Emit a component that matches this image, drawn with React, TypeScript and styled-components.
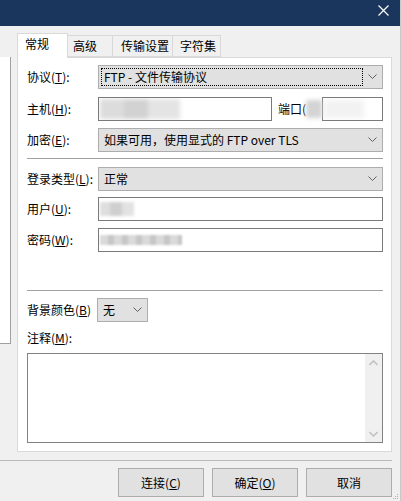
import React from "react";
import styled, { createGlobalStyle } from "styled-components";

const GlobalStyle = createGlobalStyle`
  html, body { margin: 0; padding: 0; background: #f0f0f0; }
  * { box-sizing: border-box; }
`;

const Window = styled.div`
  position: relative;
  width: 401px;
  height: 501px;
  background: #f0f0f0;
  display: flex;
  flex-direction: column;
  overflow: hidden;
  font-family: "Noto Sans CJK SC", "Microsoft YaHei", sans-serif;
  font-size: 12px;
  line-height: 16px;
  color: #000;
  border-right: 1px solid #c8c8c8;
`;

const TitleBar = styled.div`
  height: 26px;
  flex-shrink: 0;
  background: #1b365d;
  display: flex;
  justify-content: flex-end;
  align-items: flex-start;
  padding: 5px 11px 0 0;
`;

const Body = styled.div`
  height: 434px;
  flex-shrink: 0;
  display: flex;
  align-items: flex-start;
`;

const SiteTree = styled.div`
  width: 11px;
  height: 287px;
  margin-top: 31px;
  background: #fff;
  border-right: 1px solid #a0a0a0;
  border-bottom: 1px solid #a0a0a0;
  flex-shrink: 0;
`;

const TabArea = styled.div`
  margin-left: 6px;
  margin-top: 7px;
  width: 375px;
  display: flex;
  flex-direction: column;
`;

const TabStrip = styled.div`
  display: flex;
  align-items: flex-end;
  height: 24px;
  position: relative;
  z-index: 1;
`;

const Tab = styled.div<{ $active?: boolean; $w: number; $pad: number }>`
  width: ${(p) => p.$w}px;
  padding-left: ${(p) => p.$pad}px;
  height: ${(p) => (p.$active ? 25 : 22)}px;
  margin-bottom: ${(p) => (p.$active ? -1 : 0)}px;
  background: ${(p) => (p.$active ? "#fff" : "#f0f0f0")};
  border: 1px solid #d9d9d9;
  border-bottom: ${(p) => (p.$active ? "none" : "1px solid #d9d9d9")};
  border-left: ${(p) => (p.$active ? "1px solid #d9d9d9" : "none")};
  padding-top: ${(p) => (p.$active ? 2 : 2)}px;
  white-space: nowrap;
`;

const Panel = styled.div`
  height: 395px;
  background: #fff;
  border: 1px solid #d9d9d9;
  padding: 7px 8px 0 9px;
  display: flex;
  flex-direction: column;
`;

const Row = styled.div<{ $mt: number }>`
  display: flex;
  align-items: center;
  height: 24px;
  margin-top: ${(p) => p.$mt}px;
`;

const Label = styled.div<{ $w?: number }>`
  width: ${(p) => p.$w ?? 71}px;
  flex-shrink: 0;
  white-space: nowrap;
`;

const U = styled.span`
  text-decoration: underline;
  text-underline-offset: 1px;
`;

const SelectBox = styled.div<{ $w?: number }>`
  ${(p) => (p.$w ? `width: ${p.$w}px;` : "flex: 1;")}
  height: 24px;
  background: #e1e1e1;
  border: 1px solid #adadad;
  display: flex;
  align-items: stretch;
`;

const SelectValue = styled.div<{ $focus?: boolean }>`
  flex: 1;
  margin: 2px 0 2px 2px;
  padding-left: 2px;
  display: flex;
  align-items: center;
  border: 1px dotted ${(p) => (p.$focus ? "#000" : "transparent")};
  white-space: nowrap;
  overflow: hidden;
`;

const ArrowBox = styled.div`
  width: 19px;
  display: flex;
  align-items: center;
  justify-content: center;
`;

const Input = styled.div<{ $w?: number }>`
  ${(p) => (p.$w ? `width: ${p.$w}px;` : "flex: 1;")}
  height: 24px;
  background: #fff;
  border: 1px solid #7a7a7a;
  display: flex;
  align-items: center;
  padding-left: 1px;
  overflow: hidden;
`;

const Blur = styled.div<{ $w: number; $h: number; $bg: string; $r?: number }>`
  width: ${(p) => p.$w}px;
  height: ${(p) => p.$h}px;
  background: ${(p) => p.$bg};
  filter: blur(${(p) => p.$r ?? 1.5}px);
  flex-shrink: 0;
`;

const PortLabel = styled.div`
  margin-left: 6px;
  white-space: nowrap;
  display: flex;
  align-items: center;
`;

const Separator = styled.div<{ $mt: number }>`
  height: 1px;
  background: #a0a0a0;
  margin-top: ${(p) => p.$mt}px;
  flex-shrink: 0;
`;

const NoteLabel = styled.div`
  margin-top: 8px;
  height: 16px;
`;

const TextArea = styled.div`
  margin-top: 7px;
  height: 90px;
  border: 1px solid #828282;
  background: #fff;
  display: flex;
  justify-content: flex-end;
`;

const ScrollBar = styled.div`
  width: 17px;
  background: #f0f0f0;
  display: flex;
  flex-direction: column;
  justify-content: space-between;
`;

const ScrollArrow = styled.div`
  height: 17px;
  display: flex;
  align-items: center;
  justify-content: center;
`;

const FooterLine = styled.div`
  height: 1px;
  width: 392px;
  background: #b9b9b9;
  flex-shrink: 0;
`;

const Footer = styled.div`
  display: flex;
  justify-content: flex-end;
  gap: 8px;
  padding: 7px 9px 0 0;
  width: 401px;
`;

const Button = styled.div`
  width: 86px;
  height: 29px;
  background: #e1e1e1;
  border: 1px solid #adadad;
  display: flex;
  align-items: center;
  justify-content: center;
`;

const Grip = styled.svg`
  position: absolute;
  right: 1px;
  bottom: 1px;
`;

const Chevron = () => (
  <svg width="9" height="6" viewBox="0 0 9 6">
    <path d="M0.5 0.5 L4.5 4.5 L8.5 0.5" fill="none" stroke="#606060" strokeWidth="1" />
  </svg>
);

const ScrollChevron = ({ up }: { up?: boolean }) => (
  <svg width="9" height="6" viewBox="0 0 9 6">
    <path
      d={up ? "M0.5 5 L4.5 1 L8.5 5" : "M0.5 1 L4.5 5 L8.5 1"}
      fill="none"
      stroke="#c2c2c2"
      strokeWidth="1.6"
    />
  </svg>
);

const Select = ({ value, focus, w }: { value: string; focus?: boolean; w?: number }) => (
  <SelectBox $w={w}>
    <SelectValue $focus={focus}>{value}</SelectValue>
    <ArrowBox>
      <Chevron />
    </ArrowBox>
  </SelectBox>
);

export default function App() {
  return (
    <Window>
      <GlobalStyle />
      <TitleBar>
        <svg width="11" height="11" viewBox="0 0 11 11">
          <path d="M0.5 0.5 L10.5 10.5 M10.5 0.5 L0.5 10.5" stroke="#fff" strokeWidth="1.2" />
        </svg>
      </TitleBar>
      <Body>
        <SiteTree />
        <TabArea>
          <TabStrip>
            <Tab $active $w={51} $pad={7}>常规</Tab>
            <Tab $w={45} $pad={5}>高级</Tab>
            <Tab $w={60} $pad={8}>传输设置</Tab>
            <Tab $w={48} $pad={7}>字符集</Tab>
          </TabStrip>
          <Panel>
            <Row $mt={0}>
              <Label>协议(<U>T</U>):</Label>
              <Select value="FTP - 文件传输协议" focus />
            </Row>
            <Row $mt={8}>
              <Label>主机(<U>H</U>):</Label>
              <Input $w={174}>
                <Blur $w={80} $h={20} $r={2} $bg="linear-gradient(90deg, #dcdcdc 0 30%, #d2d2d2 30% 60%, #e4e4e4 60% 100%)" />
              </Input>
              <PortLabel>
                端口(
                <Blur $w={16} $h={18} $r={2} $bg="#d4d4d4" />
              </PortLabel>
              <Input>
                <Blur $w={40} $h={18} $r={3} $bg="#f2f2f2" />
              </Input>
            </Row>
            <Row $mt={7}>
              <Label>加密(<U>E</U>):</Label>
              <Select value="如果可用，使用显式的 FTP over TLS" />
            </Row>
            <Separator $mt={6} />
            <Row $mt={8}>
              <Label>登录类型(<U>L</U>):</Label>
              <Select value="正常" />
            </Row>
            <Row $mt={6}>
              <Label>用户(<U>U</U>):</Label>
              <Input>
                <Blur $w={34} $h={14} $r={1.5} $bg="linear-gradient(90deg, #dedede 0 30%, #cfcfcf 30% 65%, #e2e2e2 65% 100%)" />
              </Input>
            </Row>
            <Row $mt={7}>
              <Label>密码(<U>W</U>):</Label>
              <Input>
                <Blur $w={82} $h={10} $r={1} $bg="repeating-linear-gradient(90deg, #dadada 0 8px, #c6c6c6 8px 14px)" />
              </Input>
            </Row>
            <Separator $mt={38} />
            <Row $mt={7}>
              <Label $w={70}>背景颜色(<U>B</U>)</Label>
              <Select value="无" w={51} />
            </Row>
            <NoteLabel>注释(<U>M</U>):</NoteLabel>
            <TextArea>
              <ScrollBar>
                <ScrollArrow>
                  <ScrollChevron up />
                </ScrollArrow>
                <ScrollArrow>
                  <ScrollChevron />
                </ScrollArrow>
              </ScrollBar>
            </TextArea>
          </Panel>
        </TabArea>
      </Body>
      <FooterLine />
      <Footer>
        <Button>连接(<U>C</U>)</Button>
        <Button>确定(<U>O</U>)</Button>
        <Button>取消</Button>
      </Footer>
      <Grip width="6" height="6" viewBox="0 0 6 6">
        <rect x="4" y="0" width="1" height="1" fill="#b0b0b0" />
        <rect x="2" y="2" width="1" height="1" fill="#b0b0b0" />
        <rect x="4" y="2" width="1" height="1" fill="#b0b0b0" />
        <rect x="0" y="4" width="1" height="1" fill="#b0b0b0" />
        <rect x="2" y="4" width="1" height="1" fill="#b0b0b0" />
        <rect x="4" y="4" width="1" height="1" fill="#b0b0b0" />
      </Grip>
    </Window>
  );
}
